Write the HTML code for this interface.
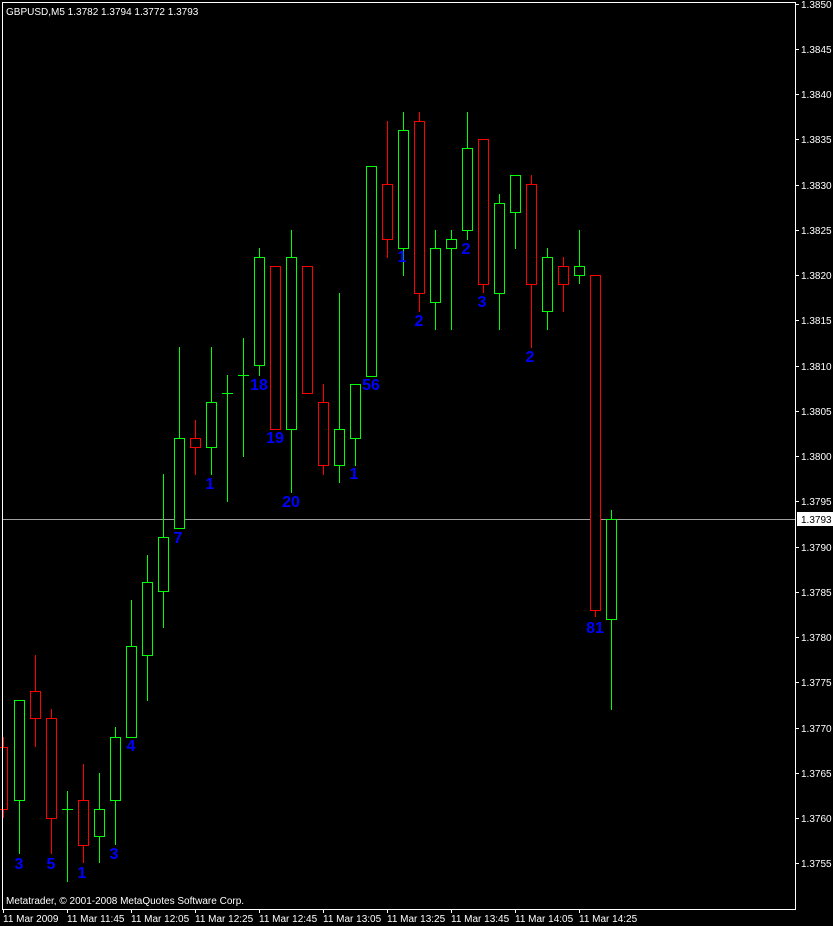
<!DOCTYPE html>
<html><head><meta charset="utf-8"><style>
html,body{margin:0;padding:0;background:#000;}
svg{display:block;}
text{font-family:"Liberation Sans",sans-serif;}
</style></head><body>
<svg width="833" height="926" xmlns="http://www.w3.org/2000/svg" shape-rendering="crispEdges">
<rect width="833" height="926" fill="#000"/>
<!-- current price line -->
<line x1="3" y1="519.5" x2="795" y2="519.5" stroke="#a0a0a0"/>
<!-- price axis -->
<g fill="#fff" font-size="10">
<g stroke="#fff">
<line x1="795" y1="4.5" x2="799" y2="4.5"/><line x1="795" y1="49.5" x2="799" y2="49.5"/><line x1="795" y1="94.5" x2="799" y2="94.5"/>
<line x1="795" y1="139.5" x2="799" y2="139.5"/><line x1="795" y1="185.5" x2="799" y2="185.5"/><line x1="795" y1="230.5" x2="799" y2="230.5"/>
<line x1="795" y1="275.5" x2="799" y2="275.5"/><line x1="795" y1="320.5" x2="799" y2="320.5"/><line x1="795" y1="366.5" x2="799" y2="366.5"/>
<line x1="795" y1="411.5" x2="799" y2="411.5"/><line x1="795" y1="456.5" x2="799" y2="456.5"/><line x1="795" y1="501.5" x2="799" y2="501.5"/>
<line x1="795" y1="547.5" x2="799" y2="547.5"/><line x1="795" y1="592.5" x2="799" y2="592.5"/><line x1="795" y1="637.5" x2="799" y2="637.5"/>
<line x1="795" y1="682.5" x2="799" y2="682.5"/><line x1="795" y1="728.5" x2="799" y2="728.5"/><line x1="795" y1="773.5" x2="799" y2="773.5"/>
<line x1="795" y1="818.5" x2="799" y2="818.5"/><line x1="795" y1="863.5" x2="799" y2="863.5"/>
</g>
<text x="801" y="8">1.3850</text><text x="801" y="53">1.3845</text><text x="801" y="98">1.3840</text>
<text x="801" y="143">1.3835</text><text x="801" y="189">1.3830</text><text x="801" y="234">1.3825</text>
<text x="801" y="279">1.3820</text><text x="801" y="324">1.3815</text><text x="801" y="370">1.3810</text>
<text x="801" y="415">1.3805</text><text x="801" y="460">1.3800</text><text x="801" y="505">1.3795</text>
<text x="801" y="551">1.3790</text><text x="801" y="596">1.3785</text><text x="801" y="641">1.3780</text>
<text x="801" y="686">1.3775</text><text x="801" y="732">1.3770</text><text x="801" y="777">1.3765</text>
<text x="801" y="822">1.3760</text><text x="801" y="867">1.3755</text>
<rect x="797" y="512" width="36" height="14" fill="#fff"/>
<text x="801" y="523" fill="#000">1.3793</text>
</g>
<!-- time axis -->
<g stroke="#fff">
<line x1="3.5" y1="909" x2="3.5" y2="913"/><line x1="67.5" y1="909" x2="67.5" y2="913"/><line x1="131.5" y1="909" x2="131.5" y2="913"/>
<line x1="195.5" y1="909" x2="195.5" y2="913"/><line x1="259.5" y1="909" x2="259.5" y2="913"/><line x1="323.5" y1="909" x2="323.5" y2="913"/>
<line x1="387.5" y1="909" x2="387.5" y2="913"/><line x1="451.5" y1="909" x2="451.5" y2="913"/><line x1="515.5" y1="909" x2="515.5" y2="913"/>
<line x1="579.5" y1="909" x2="579.5" y2="913"/>
</g>
<g fill="#fff" font-size="10">
<text x="3" y="922">11 Mar 2009</text><text x="67" y="922">11 Mar 11:45</text><text x="131" y="922">11 Mar 12:05</text>
<text x="195" y="922">11 Mar 12:25</text><text x="259" y="922">11 Mar 12:45</text><text x="323" y="922">11 Mar 13:05</text>
<text x="387" y="922">11 Mar 13:25</text><text x="451" y="922">11 Mar 13:45</text><text x="515" y="922">11 Mar 14:05</text>
<text x="579" y="922">11 Mar 14:25</text>
<text x="6" y="15">GBPUSD,M5  1.3782 1.3794 1.3772 1.3793</text>
<text x="6" y="904">Metatrader, © 2001-2008 MetaQuotes Software Corp.</text>
</g>
<!-- candles -->
<g fill="none" stroke-width="1">
<g stroke="#ff0000">
<line x1="3.5" y1="737" x2="3.5" y2="818"/><rect x="-2.5" y="747.5" width="10" height="62" fill="#000"/>
<line x1="35.5" y1="655" x2="35.5" y2="747"/><rect x="30.5" y="691.5" width="10" height="27" fill="#000"/>
<line x1="51.5" y1="709" x2="51.5" y2="854"/><rect x="46.5" y="718.5" width="10" height="100" fill="#000"/>
<line x1="83.5" y1="764" x2="83.5" y2="863"/><rect x="78.5" y="800.5" width="10" height="45" fill="#000"/>
<line x1="195.5" y1="420" x2="195.5" y2="475"/><rect x="190.5" y="438.5" width="10" height="9" fill="#000"/>
<rect x="270.5" y="266.5" width="10" height="163" fill="#000"/>
<rect x="302.5" y="266.5" width="10" height="127" fill="#000"/>
<line x1="323.5" y1="384" x2="323.5" y2="475"/><rect x="318.5" y="402.5" width="10" height="63" fill="#000"/>
<line x1="387.5" y1="121" x2="387.5" y2="258"/><rect x="382.5" y="184.5" width="10" height="55" fill="#000"/>
<line x1="419.5" y1="112" x2="419.5" y2="312"/><rect x="414.5" y="121.5" width="10" height="172" fill="#000"/>
<line x1="483.5" y1="139" x2="483.5" y2="293"/><rect x="478.5" y="139.5" width="10" height="145" fill="#000"/>
<line x1="531.5" y1="175" x2="531.5" y2="348"/><rect x="526.5" y="184.5" width="10" height="100" fill="#000"/>
<line x1="563.5" y1="257" x2="563.5" y2="312"/><rect x="558.5" y="266.5" width="10" height="18" fill="#000"/>
<line x1="595.5" y1="275" x2="595.5" y2="617"/><rect x="590.5" y="275.5" width="10" height="335" fill="#000"/>
</g>
<g stroke="#00ff00">
<line x1="19.5" y1="700" x2="19.5" y2="854"/><rect x="14.5" y="700.5" width="10" height="100" fill="#000"/>
<line x1="67.5" y1="791" x2="67.5" y2="882"/><line x1="62" y1="809.5" x2="73" y2="809.5"/>
<line x1="99.5" y1="773" x2="99.5" y2="863"/><rect x="94.5" y="809.5" width="10" height="27" fill="#000"/>
<line x1="115.5" y1="727" x2="115.5" y2="845"/><rect x="110.5" y="737.5" width="10" height="63" fill="#000"/>
<line x1="131.5" y1="600" x2="131.5" y2="737"/><rect x="126.5" y="646.5" width="10" height="91" fill="#000"/>
<line x1="147.5" y1="555" x2="147.5" y2="701"/><rect x="142.5" y="582.5" width="10" height="73" fill="#000"/>
<line x1="163.5" y1="474" x2="163.5" y2="628"/><rect x="158.5" y="537.5" width="10" height="54" fill="#000"/>
<line x1="179.5" y1="347" x2="179.5" y2="528"/><rect x="174.5" y="438.5" width="10" height="90" fill="#000"/>
<line x1="211.5" y1="347" x2="211.5" y2="475"/><rect x="206.5" y="402.5" width="10" height="45" fill="#000"/>
<line x1="227.5" y1="375" x2="227.5" y2="502"/><line x1="222" y1="393.5" x2="233" y2="393.5"/>
<line x1="243.5" y1="338" x2="243.5" y2="457"/><line x1="238" y1="375.5" x2="249" y2="375.5"/>
<line x1="259.5" y1="248" x2="259.5" y2="376"/><rect x="254.5" y="257.5" width="10" height="108" fill="#000"/>
<line x1="291.5" y1="230" x2="291.5" y2="493"/><rect x="286.5" y="257.5" width="10" height="172" fill="#000"/>
<line x1="339.5" y1="293" x2="339.5" y2="483"/><rect x="334.5" y="429.5" width="10" height="36" fill="#000"/>
<line x1="355.5" y1="438" x2="355.5" y2="466"/><rect x="350.5" y="384.5" width="10" height="54" fill="#000"/>
<rect x="366.5" y="166.5" width="10" height="210" fill="#000"/>
<line x1="403.5" y1="112" x2="403.5" y2="276"/><rect x="398.5" y="130.5" width="10" height="118" fill="#000"/>
<line x1="435.5" y1="230" x2="435.5" y2="330"/><rect x="430.5" y="248.5" width="10" height="54" fill="#000"/>
<line x1="451.5" y1="230" x2="451.5" y2="330"/><rect x="446.5" y="239.5" width="10" height="9" fill="#000"/>
<line x1="467.5" y1="112" x2="467.5" y2="240"/><rect x="462.5" y="148.5" width="10" height="82" fill="#000"/>
<line x1="499.5" y1="194" x2="499.5" y2="330"/><rect x="494.5" y="203.5" width="10" height="90" fill="#000"/>
<line x1="515.5" y1="175" x2="515.5" y2="249"/><rect x="510.5" y="175.5" width="10" height="37" fill="#000"/>
<line x1="547.5" y1="248" x2="547.5" y2="330"/><rect x="542.5" y="257.5" width="10" height="54" fill="#000"/>
<line x1="579.5" y1="230" x2="579.5" y2="284"/><rect x="574.5" y="266.5" width="10" height="9" fill="#000"/>
<line x1="611.5" y1="510" x2="611.5" y2="710"/><rect x="606.5" y="519.5" width="10" height="100" fill="#000"/>
</g>
</g>
<!-- frame -->
<path d="M2.5 2.5 H795.5 V909.5 H2.5 Z" fill="none" stroke="#fff"/>
<!-- labels -->
<g fill="#0000ff" font-size="16" font-weight="bold" text-anchor="middle" shape-rendering="auto">
<text x="19" y="869">3</text><text x="51" y="869">5</text><text x="82" y="878">1</text><text x="114" y="859">3</text>
<text x="131" y="751">4</text><text x="178" y="543">7</text><text x="210" y="489">1</text><text x="259" y="390">18</text>
<text x="275" y="443">19</text><text x="291" y="507">20</text><text x="354" y="479">1</text><text x="371" y="390">56</text>
<text x="402" y="262">1</text><text x="419" y="326">2</text><text x="466" y="254">2</text><text x="482" y="307">3</text>
<text x="530" y="362">2</text><text x="595" y="633">81</text>
</g>
</svg>
</body></html>
